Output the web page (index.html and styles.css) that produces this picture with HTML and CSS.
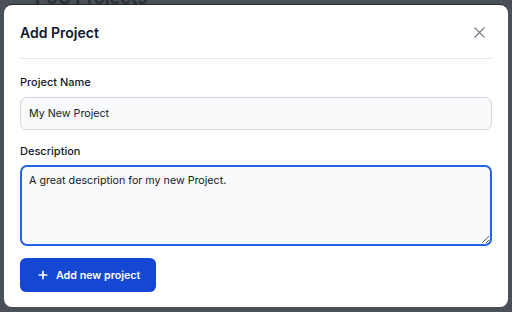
FILE: index.html
```html
<!DOCTYPE html>
<html>
<head>
<meta charset="utf-8">
<link rel="stylesheet" href="styles.css">
</head>
<body>
<div class="page">
  <h1 class="page-title">PoC Projects</h1>
</div>
<div class="overlay">
  <div class="modal">
    <div class="modal-header">
      <h3 class="modal-title">Add Project</h3>
      <button class="close" aria-label="Close">
        <svg width="11" height="11" viewBox="0 0 12 12"><path d="M1 1L11 11M11 1L1 11" stroke="#6b7280" stroke-width="1.4" stroke-linecap="round"/></svg>
      </button>
    </div>
    <form class="modal-body">
      <label class="label" for="name">Project Name</label>
      <input class="input" id="name" type="text" value="My New Project">
      <label class="label" for="desc">Description</label>
      <textarea class="input textarea" id="desc">A great description for my new Project.</textarea>
      <button type="button" class="btn">
        <svg width="10" height="10" viewBox="0 0 12 12"><path d="M6 1.5V10.5M1.5 6H10.5" stroke="#fff" stroke-width="2" stroke-linecap="round"/></svg>
        <span>Add new project</span>
      </button>
    </form>
  </div>
</div>
</body>
</html>
```
FILE: styles.css
```css
* { box-sizing: border-box; }
html, body { margin: 0; padding: 0; }
body {
  width: 512px;
  height: 312px;
  overflow: hidden;
  background: #4a4f58;
  font-family: Inter, "Liberation Sans", sans-serif;
  position: relative;
}
.page { padding: 0 0 0 35px; }
.page-title {
  margin: -13px 0 0;
  font-size: 18px;
  line-height: 22px;
  font-weight: 700;
  color: #2b2f36;
}
.overlay {
  position: absolute;
  left: 4px;
  top: 5px;
}
.modal {
  width: 504px;
  height: 302px;
  background: #fff;
  border-radius: 8px;
  box-shadow: 0 -1px 0 #262a30;
  padding: 0 16px;
}
.modal-header {
  height: 54px;
  display: flex;
  align-items: center;
  justify-content: space-between;
  border-bottom: 1px solid #e5e7eb;
}
.modal-title {
  margin: 0;
  font-size: 14px;
  font-weight: 600;
  color: #111827;
  padding-top: 2px;
}
.close {
  border: 0;
  background: none;
  padding: 0;
  margin-right: 7px;
  display: flex;
  margin-top: 2px;
}
.modal-body {
  display: flex;
  flex-direction: column;
  align-items: flex-start;
  padding-top: 16px;
}
.label {
  font-size: 11px;
  font-weight: 500;
  color: #111827;
  line-height: 14px;
  margin-bottom: 8px;
}
.input {
  width: 100%;
  height: 33px;
  background: #f9fafb;
  border: 1px solid #d1d5db;
  border-radius: 7px;
  font-family: inherit;
  font-size: 10.7px;
  color: #111827;
  padding: 0 8px;
  margin: 0 0 14px;
  outline: none;
}
#desc { margin-top: -1px; }
.textarea {
  height: 81px;
  padding: 6px 7px;
  border: 2px solid #2563eb;
  resize: vertical;
  margin-bottom: 12px;
  line-height: 16px;
}
.btn {
  display: flex;
  align-items: center;
  gap: 8px;
  height: 34px;
  padding: 0 16px 0 18px;
  background: #1447d3;
  color: #fff;
  border: 0;
  border-radius: 6px;
  font-family: inherit;
  font-size: 10.7px;
  font-weight: 600;
}
```
